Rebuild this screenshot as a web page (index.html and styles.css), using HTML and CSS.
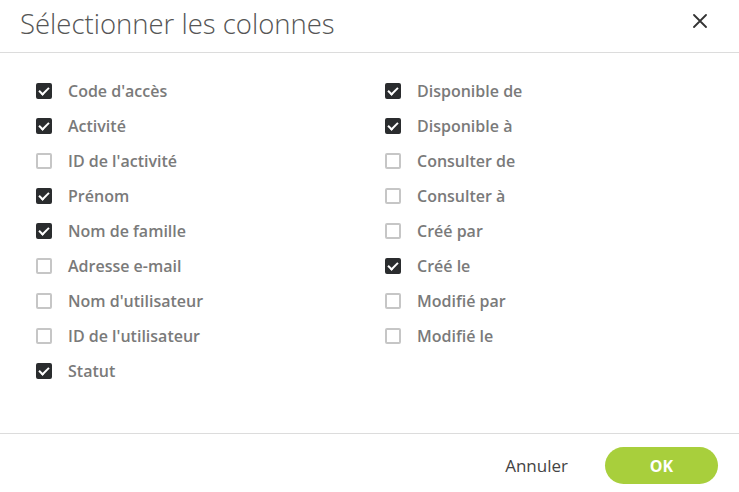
FILE: index.html
```html
<!DOCTYPE html>
<html lang="fr">
<head>
	<meta charset="UTF-8">
	<title>Sélectionner les colonnes</title>
	<link rel="stylesheet" href="styles.css">
</head>
<body>

	<div class="dialog">
		<div class="dialog-header">
			<h1>Sélectionner les colonnes</h1>
			<button class="close" aria-label="Fermer">
				<svg width="14" height="14" viewBox="0 0 14 14"><path d="M1 1 L13 13 M13 1 L1 13" stroke="#333" stroke-width="1.8" stroke-linecap="round"/></svg>
			</button>
		</div>

		<div class="dialog-body">
			<div class="column">
				<label class="option checked"><span class="box"></span>Code d'accès</label>
				<label class="option checked"><span class="box"></span>Activité</label>
				<label class="option"><span class="box"></span>ID de l'activité</label>
				<label class="option checked"><span class="box"></span>Prénom</label>
				<label class="option checked"><span class="box"></span>Nom de famille</label>
				<label class="option"><span class="box"></span>Adresse e-mail</label>
				<label class="option"><span class="box"></span>Nom d'utilisateur</label>
				<label class="option"><span class="box"></span>ID de l'utilisateur</label>
				<label class="option checked"><span class="box"></span>Statut</label>
			</div>
			<div class="column">
				<label class="option checked"><span class="box"></span>Disponible de</label>
				<label class="option checked"><span class="box"></span>Disponible à</label>
				<label class="option"><span class="box"></span>Consulter de</label>
				<label class="option"><span class="box"></span>Consulter à</label>
				<label class="option"><span class="box"></span>Créé par</label>
				<label class="option checked"><span class="box"></span>Créé le</label>
				<label class="option"><span class="box"></span>Modifié par</label>
				<label class="option"><span class="box"></span>Modifié le</label>
			</div>
		</div>

		<div class="dialog-footer">
			<button class="cancel">Annuler</button>
			<button class="ok">OK</button>
		</div>
	</div>

</body>
</html>
```

FILE: styles.css
```css
body {
	margin: 0;
	background: #fff;
	font-family: 'Open Sans', sans-serif;
}

.dialog {
	width: 739px;
	height: 492px;
	display: flex;
	flex-direction: column;
}

.dialog-header {
	height: 52px;
	display: flex;
	align-items: center;
	justify-content: space-between;
	padding: 0 32px 0 20px;
	border-bottom: 1px solid #dcdcdc;
}

h1 {
	margin: 0 0 6px 0;
	font-size: 27.5px;
	font-weight: 300;
	color: #555;
}

.close {
	background: none;
	border: none;
	padding: 0;
	margin-bottom: 10px;
	cursor: pointer;
	display: flex;
}

.dialog-body {
	display: grid;
	grid-template-columns: 349px 1fr;
	padding: 20px 0 0 36px;
	flex: 1;
}

.option {
	height: 35px;
	display: flex;
	align-items: center;
	font-size: 16px;
	font-weight: 600;
	color: #7a7a7a;
	cursor: pointer;
}

.box {
	width: 16px;
	height: 16px;
	box-sizing: border-box;
	border: 2px solid #c6c6c6;
	border-radius: 2px;
	margin-right: 16px;
	background: #fff;
	position: relative;
}

.checked .box {
	background: #2a2c2e;
	border-color: #2a2c2e;
}

.checked .box::after {
	content: '';
	position: absolute;
	left: 3px;
	top: 0px;
	width: 4px;
	height: 8px;
	border: solid #fff;
	border-width: 0 2px 2px 0;
	transform: rotate(45deg);
}

.dialog-footer {
	border-top: 1px solid #dcdcdc;
	display: flex;
	justify-content: flex-end;
	align-items: center;
	padding: 13px 21px 8px 0;
}

button {
	font-family: 'Open Sans', sans-serif;
	font-size: 16px;
	border: none;
	cursor: pointer;
}

.cancel {
	background: none;
	color: #444;
	font-size: 17px;
	padding: 0;
	margin-right: 37px;
}

.ok {
	width: 113px;
	height: 37px;
	border-radius: 19px;
	background: #a8cf3c;
	color: #fff;
	font-weight: 700;
}
```
